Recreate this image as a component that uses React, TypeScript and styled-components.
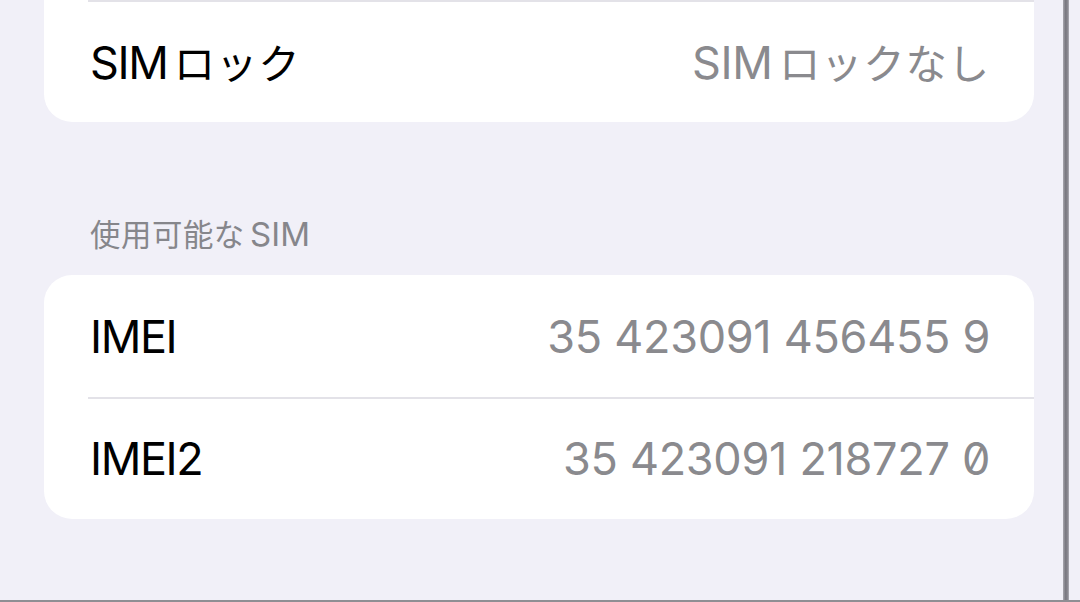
import React from "react";
import styled, { createGlobalStyle } from "styled-components";

const GlobalStyle = createGlobalStyle`
  html, body {
    margin: 0;
    padding: 0;
    background: #f1f0f8;
  }
  body {
    font-family: "Inter", "Noto Sans CJK JP", sans-serif;
    -webkit-font-smoothing: antialiased;
  }
`;

const Frame = styled.div`
  width: 1080px;
  height: 602px;
  box-sizing: border-box;
  display: flex;
  background: #f1f0f8;
  border-bottom: 2px solid #8e8e93;
  overflow: hidden;
`;

const Screen = styled.div`
  width: 1063px;
  display: flex;
  flex-direction: column;
  padding: 0 29px 0 44px;
  box-sizing: border-box;
`;

const Bezel = styled.div`
  width: 6px;
  background: linear-gradient(90deg, #a8a7af, #77767e 45%, #8a8991 75%, #b0afb7);
`;

interface CardProps {
  clippedTop?: boolean;
}

const Card = styled.div.withConfig({
  shouldForwardProp: (prop) => prop !== "clippedTop",
})<CardProps>`
  background: #ffffff;
  border-radius: ${(p) => (p.clippedTop ? "0 0 28px 28px" : "28px")};
  overflow: hidden;
`;

interface RowProps {
  divider?: boolean;
}

const Row = styled.div.withConfig({
  shouldForwardProp: (prop) => prop !== "divider",
})<RowProps>`
  position: relative;
  height: 122px;
  display: flex;
  align-items: center;
  justify-content: space-between;
  padding: 0 44px 0 46px;
  &::before {
    content: "";
    display: ${(p) => (p.divider ? "block" : "none")};
    position: absolute;
    top: 0;
    left: 44px;
    right: 0;
    height: 2px;
    background: #e3e2e8;
  }
`;

const Label = styled.span`
  font-size: 45px;
  color: #000000;
  letter-spacing: -1.4px;
  white-space: nowrap;
`;

const Value = styled.span`
  font-size: 45px;
  color: #8a8a8e;
  letter-spacing: -0.3px;
  white-space: nowrap;
`;

// latin runs keep the small gap iOS puts between them and kana
const Latin = styled.span<{ $after?: boolean }>`
  margin-right: ${(p) => (p.$after ? "0" : "0.14em")};
  margin-left: ${(p) => (p.$after ? "0.16em" : "0")};
`;

const Kana = styled.span`
  font-size: 0.92em;
  letter-spacing: 0.02em;
`;

const SlashedZero = styled.span`
  font-feature-settings: "zero" 1;
`;

const SectionHeader = styled.div`
  padding: 91px 0 0 46px;
  height: 42px;
  line-height: 42px;
  margin-bottom: 20px;
  font-size: 33px;
  color: #86868b;
  white-space: nowrap;
`;

export default function App() {
  return (
    <>
      <GlobalStyle />
      <Frame>
        <Screen>
          <Card clippedTop>
            <Row divider>
              <Label>
                <Latin>SIM</Latin>
                <Kana>ロック</Kana>
              </Label>
              <Value>
                <Latin>SIM</Latin>
                <Kana>ロックなし</Kana>
              </Value>
            </Row>
          </Card>

          <SectionHeader>
            <Kana>使用可能な</Kana>
            <Latin $after>SIM</Latin>
          </SectionHeader>

          <Card>
            <Row>
              <Label>IMEI</Label>
              <Value>35 423091 456455 9</Value>
            </Row>
            <Row divider>
              <Label>IMEI2</Label>
              <Value>
                35 423091 218727 <SlashedZero>0</SlashedZero>
              </Value>
            </Row>
          </Card>
        </Screen>
        <Bezel />
      </Frame>
    </>
  );
}
